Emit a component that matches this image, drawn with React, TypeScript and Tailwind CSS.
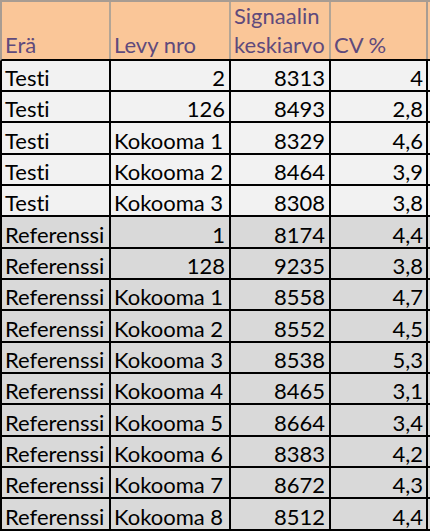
import React from "react";

type Row = { era: string; levy: string; sig: string; cv: string; ref: boolean };

const rows: Row[] = [
  { era: "Testi", levy: "2", sig: "8313", cv: "4", ref: false },
  { era: "Testi", levy: "126", sig: "8493", cv: "2,8", ref: false },
  { era: "Testi", levy: "Kokooma 1", sig: "8329", cv: "4,6", ref: false },
  { era: "Testi", levy: "Kokooma 2", sig: "8464", cv: "3,9", ref: false },
  { era: "Testi", levy: "Kokooma 3", sig: "8308", cv: "3,8", ref: false },
  { era: "Referenssi", levy: "1", sig: "8174", cv: "4,4", ref: true },
  { era: "Referenssi", levy: "128", sig: "9235", cv: "3,8", ref: true },
  { era: "Referenssi", levy: "Kokooma 1", sig: "8558", cv: "4,7", ref: true },
  { era: "Referenssi", levy: "Kokooma 2", sig: "8552", cv: "4,5", ref: true },
  { era: "Referenssi", levy: "Kokooma 3", sig: "8538", cv: "5,3", ref: true },
  { era: "Referenssi", levy: "Kokooma 4", sig: "8465", cv: "3,1", ref: true },
  { era: "Referenssi", levy: "Kokooma 5", sig: "8664", cv: "3,4", ref: true },
  { era: "Referenssi", levy: "Kokooma 6", sig: "8383", cv: "4,2", ref: true },
  { era: "Referenssi", levy: "Kokooma 7", sig: "8672", cv: "4,3", ref: true },
  { era: "Referenssi", levy: "Kokooma 8", sig: "8512", cv: "4,4", ref: true },
];

const heights = ["h-[31px]", "h-[31px]", "h-[32px]"];

export default function App() {
  return (
    <div
      className="w-[431px] h-[531px] bg-white overflow-hidden text-[22px] text-black [font-variant-ligatures:none]"
      style={{ fontFamily: "Lato, 'Open Sans', sans-serif" }}
    >
      {/* header */}
      <div className="flex h-[61px] bg-[#fac698] border-t-2 border-l-2 border-[#a89c92] border-b-2 border-b-black w-[430px] text-[#5f4a7c]">
        <div className="w-[109px] shrink-0 border-r-2 border-[#b3a596] flex items-end pl-[3px] leading-[29px]">
          Erä
        </div>
        <div className="w-[120px] shrink-0 border-r-2 border-[#b3a596] flex items-end pl-[3px] leading-[29px]">
          Levy nro
        </div>
        <div className="w-[100px] shrink-0 border-r-2 border-[#b3a596] flex items-end pl-[3px] leading-[29px]">
          <div>
            Signaalin
            <br />
            keskiarvo
          </div>
        </div>
        <div className="w-[97px] shrink-0 border-r-2 border-[#a89c92] flex items-end pl-[3px] leading-[29px]">
          CV %
        </div>
      </div>
      {/* body */}
      {rows.map((r, i) => (
        <div
          key={i}
          className={`flex w-[430px] border-l-2 border-b-2 border-black ${heights[i % 3]} ${
            r.ref ? "bg-[#d9d9d9]" : "bg-[#f2f2f2]"
          }`}
        >
          <div className="w-[109px] shrink-0 border-r-2 border-black flex items-end pl-[3px] pb-[1px] leading-[22px] whitespace-nowrap">
            {r.era}
          </div>
          <div
            className={`w-[120px] shrink-0 border-r-2 border-black flex items-end pb-[1px] leading-[22px] whitespace-nowrap ${
              r.levy.startsWith("Kokooma") ? "justify-start pl-[3px]" : "justify-end pr-[4px]"
            }`}
          >
            {r.levy}
          </div>
          <div className="w-[100px] shrink-0 border-r-2 border-black flex items-end justify-end pr-[4px] pb-[1px] leading-[22px]">
            {r.sig}
          </div>
          <div className="w-[97px] shrink-0 border-r-2 border-black flex items-end justify-end pr-[3px] pb-[1px] leading-[22px]">
            {r.cv}
          </div>
        </div>
      ))}
    </div>
  );
}
